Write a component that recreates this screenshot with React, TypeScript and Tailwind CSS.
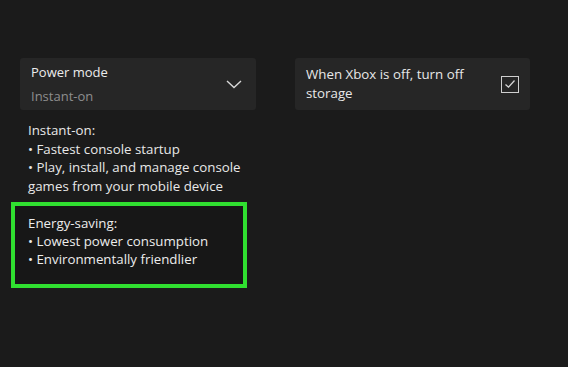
import React from "react";

export default function App() {
  return (
    <div
      className="w-[568px] h-[367px] bg-[#1b1b1b] text-[#e6e6e6] overflow-hidden pt-[58px] pl-[20px] flex gap-[39px]"
      style={{ fontFamily: '"Open Sans", "Noto Sans", sans-serif' }}
    >
      <div className="w-[236px] flex flex-col">
        <div className="h-[52px] bg-[#262626] rounded-[3px] flex items-center pl-[11px] pr-[14px]">
          <div className="flex-1 flex flex-col leading-[24px] text-[13px]">
            <span className="text-[#ececec]">Power mode</span>
            <span className="text-[#8e8e8e]">Instant-on</span>
          </div>
          <svg width="16" height="9" viewBox="0 0 16 9">
            <path d="M1 1 L8 7.5 L15 1" fill="none" stroke="#d8d8d8" strokeWidth="1.4" />
          </svg>
        </div>
        <div className="pl-[8px] pt-[11px] text-[13.3px] leading-[18.5px] text-[#e8e8e8]">
          <div>Instant-on:</div>
          <div>• Fastest console startup</div>
          <div>• Play, install, and manage console games from your mobile device</div>
        </div>
        <div className="ml-[-9px] mt-[7px] w-[236px] h-[86px] border-[4px] border-[#30e030] bg-[#171717] pl-[13px] pt-[8px] text-[13.3px] leading-[18px] text-[#ececec]">
          <div>Energy-saving:</div>
          <div>• Lowest power consumption</div>
          <div>• Environmentally friendlier</div>
        </div>
      </div>
      <div className="w-[235px] h-[52px] bg-[#262626] rounded-[3px] flex items-center pl-[11px] pr-[11px]">
        <div className="flex-1 text-[13.3px] leading-[19px] text-[#e8e8e8]">
          When Xbox is off, turn off storage
        </div>
        <div className="w-[18px] h-[17px] border-[1.5px] border-[#cfcfcf] flex items-center justify-center">
          <svg width="12" height="10" viewBox="0 0 12 10">
            <path d="M1.5 5.5 L4.5 8.2 L10.5 1.5" fill="none" stroke="#d6d6d6" strokeWidth="1.3" />
          </svg>
        </div>
      </div>
    </div>
  );
}
